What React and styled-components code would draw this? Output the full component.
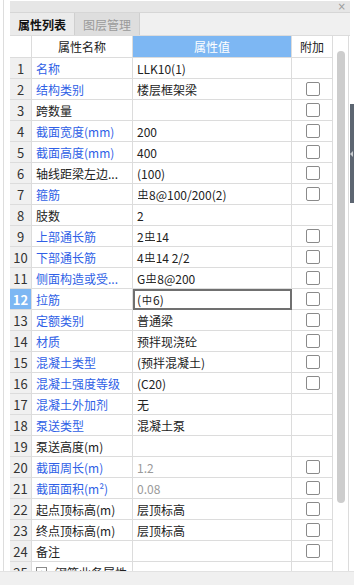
import React from "react";
import styled, { createGlobalStyle } from "styled-components";

const rows = [
    { name: "名称", value: "LLK10(1)", link: true },
    { name: "结构类别", value: "楼层框架梁", link: true, check: true },
    { name: "跨数量", value: "", check: true },
    { name: "截面宽度(mm)", value: "200", link: true, check: true },
    { name: "截面高度(mm)", value: "400", link: true, check: true },
    { name: "轴线距梁左边...", value: "(100)", check: true },
    { name: "箍筋", value: [["C"], "8@100/200(2)"], link: true, check: true },
    { name: "肢数", value: "2" },
    { name: "上部通长筋", value: ["2", ["C"], "14"], link: true, check: true },
    { name: "下部通长筋", value: ["4", ["C"], "14 2/2"], link: true, check: true },
    { name: "侧面构造或受...", value: ["G", ["C"], "8@200"], link: true, check: true },
    { name: "拉筋", value: ["(", ["A"], "6)"], link: true, check: true, selected: true },
    { name: "定额类别", value: "普通梁", link: true, check: true },
    { name: "材质", value: "预拌现浇砼", link: true, check: true },
    { name: "混凝土类型", value: "(预拌混凝土)", link: true, check: true },
    { name: "混凝土强度等级", value: "(C20)", link: true, check: true },
    { name: "混凝土外加剂", value: "无", link: true },
    { name: "泵送类型", value: "混凝土泵", link: true },
    { name: "泵送高度(m)", value: "" },
    { name: "截面周长(m)", value: "1.2", link: true, muted: true, check: true },
    { name: "截面面积(m²)", value: "0.08", link: true, muted: true, check: true },
    { name: "起点顶标高(m)", value: "层顶标高", check: true },
    { name: "终点顶标高(m)", value: "层顶标高", check: true },
    { name: "备注", value: "", check: true },
];

const renderValue = (value) => {
    if (!Array.isArray(value)) return value;
    return value.map((part, i) =>
        Array.isArray(part) ? <Rebar key={i} $grade={part[0]}>中</Rebar> : <span key={i}>{part}</span>
    );
};

const App = () => {
    return (
        <>
            <GlobalStyle />
            <Page>
                <Main>
                    <Gutter />
                    <Panel>
                        <TitleBar>
                            <Close>×</Close>
                        </TitleBar>
                        <TabBar>
                            <Tab $active>属性列表</Tab>
                            <Tab>图层管理</Tab>
                        </TabBar>
                        <Body>
                            <Table>
                                <HeadRow>
                                    <HeadCell />
                                    <HeadCell>属性名称</HeadCell>
                                    <HeadCell $blue>属性值</HeadCell>
                                    <HeadCell>附加</HeadCell>
                                </HeadRow>
                                {rows.map((r, i) => (
                                    <Row key={i}>
                                        <IndexCell $selected={r.selected}>{i + 1}</IndexCell>
                                        <NameCell $link={r.link}>{r.name}</NameCell>
                                        <ValueCell $selected={r.selected} $muted={r.muted}>
                                            {renderValue(r.value)}
                                        </ValueCell>
                                        <CheckCell>{r.check && <CheckBox />}</CheckCell>
                                    </Row>
                                ))}
                                <Row>
                                    <IndexCell>25</IndexCell>
                                    <NameCell>
                                        <Expand>+</Expand>
                                        钢筋业务属性
                                    </NameCell>
                                    <ValueCell />
                                    <CheckCell />
                                </Row>
                            </Table>
                            <ScrollTrack>
                                <Thumb />
                            </ScrollTrack>
                        </Body>
                    </Panel>
                    <Edge>
                        <Handle>
                            <Arrow />
                        </Handle>
                    </Edge>
                </Main>
                <Footer />
            </Page>
        </>
    );
};

const GlobalStyle = createGlobalStyle`
    body {
        margin: 0;
        background: #ffffff;
        font-family: "Noto Sans CJK SC", "Noto Sans", sans-serif;
    }
`;

const Page = styled.div`
    width: 354px;
    height: 585px;
    display: flex;
    flex-direction: column;
    overflow: hidden;
`;

const Main = styled.div`
    height: 572px;
    display: flex;
    overflow: hidden;
`;

const Gutter = styled.div`
    width: 6px;
    margin-left: 3px;
    border-left: 1px solid #dddddd;
`;

const Panel = styled.div`
    width: 340px;
    display: flex;
    flex-direction: column;
    overflow: hidden;
`;

const TitleBar = styled.div`
    height: 11px;
    margin-top: 1px;
    background: #e6e6e6;
    display: flex;
    justify-content: flex-end;
    align-items: center;
    padding-right: 4px;
`;

const Close = styled.span`
    font-family: "DejaVu Sans", sans-serif;
    font-size: 10px;
    line-height: 10px;
    color: #9a9a9a;
`;

const TabBar = styled.div`
    height: 22px;
    display: flex;
    background: #f0f0f0;
    border-top: 1px solid #d6d6d6;
`;

const Tab = styled.div`
    width: 64px;
    display: flex;
    align-items: center;
    justify-content: center;
    font-size: 12px;
    font-weight: ${(p) => (p.$active ? 700 : 400)};
    color: ${(p) => (p.$active ? "#111111" : "#9a9a9a")};
    background: ${(p) => (p.$active ? "#ebebeb" : "#dedede")};
    border-right: 1px solid #cfcfcf;
`;

const Body = styled.div`
    flex: 1;
    display: flex;
    overflow: hidden;
    border-top: 1px solid #dcdcdc;
`;

const Table = styled.div`
    width: 323px;
    display: flex;
    flex-direction: column;
`;

const columns = "22px 101px 159px 41px";

const HeadRow = styled.div`
    display: grid;
    grid-template-columns: ${columns};
    height: 22px;
    flex: none;
`;

const HeadCell = styled.div`
    display: flex;
    align-items: center;
    justify-content: center;
    font-size: 12px;
    color: ${(p) => (p.$blue ? "#ffffff" : "#222222")};
    background: ${(p) => (p.$blue ? "#7db7f3" : "#ffffff")};
    border-right: 1px solid #dcdcdc;
    border-bottom: 1px solid #dcdcdc;
`;

const Row = styled.div`
    display: grid;
    grid-template-columns: ${columns};
    height: 21px;
    flex: none;
`;

const Cell = styled.div`
    display: flex;
    align-items: center;
    font-size: 12px;
    white-space: nowrap;
    overflow: hidden;
    border-right: 1px solid #dcdcdc;
    border-bottom: 1px solid #dcdcdc;
    box-sizing: border-box;
`;

const IndexCell = styled(Cell)`
    justify-content: center;
    font-size: 13px;
    color: ${(p) => (p.$selected ? "#ffffff" : "#333333")};
    font-weight: ${(p) => (p.$selected ? 700 : 400)};
    background: ${(p) => (p.$selected ? "#7db7f3" : "#f0f0f0")};
`;

const NameCell = styled(Cell)`
    padding-left: 4px;
    color: ${(p) => (p.$link ? "#2f5fe6" : "#222222")};
`;

const ValueCell = styled(Cell)`
    color: ${(p) => (p.$muted ? "#9a9a9a" : "#222222")};
    border: ${(p) => (p.$selected ? "2px solid #707070" : "")};
    padding-left: ${(p) => (p.$selected ? "2px" : "4px")};
`;

const CheckCell = styled(Cell)`
    justify-content: center;
`;

const CheckBox = styled.span`
    width: 12px;
    height: 12px;
    border: 1px solid #8a8a8a;
    border-radius: 2px;
    background: #ffffff;
    margin-left: 1px;
`;

const Rebar = styled.span`
    display: inline-block;
    font-size: 10px;
    line-height: 9px;
    margin: 0 1px;
    vertical-align: 2px;
    border-bottom: ${(p) => (p.$grade === "C" ? "1px solid #333333" : "none")};
`;

const Expand = styled.span`
    width: 9px;
    height: 9px;
    border: 1px solid #8a8a8a;
    font-size: 10px;
    line-height: 9px;
    text-align: center;
    color: #333333;
    margin-right: 8px;
`;

const ScrollTrack = styled.div`
    width: 15px;
    border-right: 1px solid #dcdcdc;
    padding-top: 15px;
    display: flex;
    justify-content: center;
`;

const Thumb = styled.div`
    width: 8px;
    height: 452px;
    border-radius: 4px;
    background: #cdcdcd;
`;

const Edge = styled.div`
    width: 4px;
    display: flex;
    flex-direction: column;
`;

const Handle = styled.div`
    margin-top: 104px;
    height: 99px;
    background: #5d6672;
    display: flex;
    align-items: center;
`;

const Arrow = styled.span`
    width: 0;
    height: 0;
    border-top: 3px solid transparent;
    border-bottom: 3px solid transparent;
    border-right: 3px solid #c8ccd0;
`;

const Footer = styled.div`
    height: 13px;
    background: #f0f0f0;
    border-top: 1px solid #e2e2e2;
`;

export default App;
